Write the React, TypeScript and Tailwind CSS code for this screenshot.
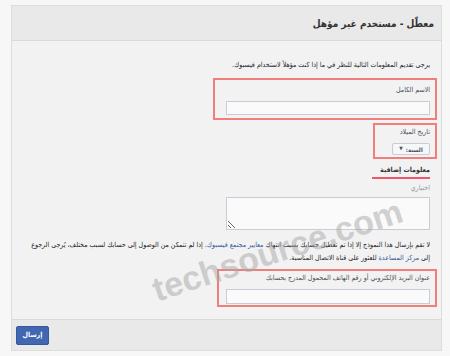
export default function App() {
  return (
    <div
      dir="rtl"
      className="relative h-[356px] w-[450px] overflow-hidden bg-[#f7f7f7] pt-[5px] font-['DejaVu_Sans_Condensed','DejaVu_Sans',sans-serif] text-[#1d2129]"
    >
      <div className="mr-[8px] w-[431px] border border-[#dcdddf] bg-[#f2f2f2]">
        {/* header */}
        <div className="flex h-[35px] items-center border-b border-[#dadada] bg-[#e9e9e9] pr-[7px]">
          <h1 className="text-[10px] font-bold text-[#333]">معطّل - مستخدم غير مؤهل</h1>
        </div>

        {/* body */}
        <div className="pb-[12px] pl-[12px] pr-[11px] pt-[18px]">
          <p className="whitespace-nowrap text-[7px] leading-[12px]">
            يرجى تقديم المعلومات التالية للنظر في ما إذا كنت مؤهلاً لاستخدام فيسبوك.
          </p>

          <div className="-mr-[7px] mt-[7px] w-[224px] border-2 border-[#f27d7d] pb-[3px] pl-[11px] pr-[5px] pt-[4px]">
            <label className="block whitespace-nowrap text-[7px] leading-[12px] text-[#4b4f56]">الاسم الكامل</label>
            <input className="mt-[5px] block h-[14px] w-[204px] border border-[#c8ccd4] bg-[#fafafa]" />
          </div>

          <div className="-mr-[7px] mt-[3px] w-[64px] border-2 border-[#f27d7d] pb-[2px] pl-[17px] pr-[5px] pt-[1px]">
            <label className="block whitespace-nowrap text-[7px] leading-[12px] text-[#4b4f56]">تاريخ الميلاد</label>
            <div className="mt-[5px] flex h-[12px] w-[38px] items-center justify-center gap-[3px] rounded-[2px] border border-[#c8ccd4] bg-[#f6f7f9] text-[6px] font-bold text-[#4b4f56]">
              <span>السنة:</span>
              <span className="text-[5px]">▼</span>
            </div>
          </div>

          <div className="mt-[5px] w-[58px] whitespace-nowrap border-b-2 border-[#f0566a] pb-[1px] text-[7px] font-bold leading-[12px] text-[#333]">
            معلومات إضافية
          </div>
          <div className="mt-[3px] text-[7px] leading-[12px] text-[#90949c]">اختياري</div>
          <textarea className="mt-[3px] block h-[33px] w-[204px] border border-[#c8ccd4] bg-[#fafafa]" />

          <p className="mt-[9px] whitespace-nowrap text-[7px] leading-[13px] text-[#1d2129]">
            لا تقم بإرسال هذا النموذج إلا إذا تم تعطيل حسابك بسبب انتهاك{' '}
            <span className="text-[#365899]">معايير مجتمع فيسبوك</span>. إذا لم تتمكن من الوصول إلى
            حسابك لسبب مختلف، يُرجى الرجوع
            <br />
            إلى <span className="text-[#365899]">مركز المساعدة</span> للعثور على قناة الاتصال المناسبة.
          </p>

          <div className="-mr-[7px] mt-[4px] w-[220px] border-2 border-[#f27d7d] pb-[1px] pl-[7px] pr-[5px] pt-[1px]">
            <label className="block whitespace-nowrap text-[7px] leading-[12px] text-[#4b4f56]">
              عنوان البريد الإلكتروني أو رقم الهاتف المحمول المدرج بحسابك
            </label>
            <input className="mt-[5px] block h-[15px] w-[204px] border border-[#c8ccd4] bg-[#fafafa]" />
          </div>
        </div>

        {/* footer */}
        <div className="flex h-[31px] items-start justify-end border-t border-[#dadada] bg-[#e9e9e9] pl-[4px] pt-[6px]">
          <button className="h-[19px] w-[33px] rounded-[2px] border border-[#365899] bg-[#4267b2] text-[7px] font-bold text-white">
            إرسال
          </button>
        </div>
      </div>

      {/* watermark */}
      <div
        dir="ltr"
        className="pointer-events-none absolute left-[147px] top-[233px] -rotate-[18deg] font-['Liberation_Sans',sans-serif] text-[34px] font-bold leading-none text-[#a8a8a8] opacity-50"
      >
        techsource.com
      </div>
    </div>
  )
}
